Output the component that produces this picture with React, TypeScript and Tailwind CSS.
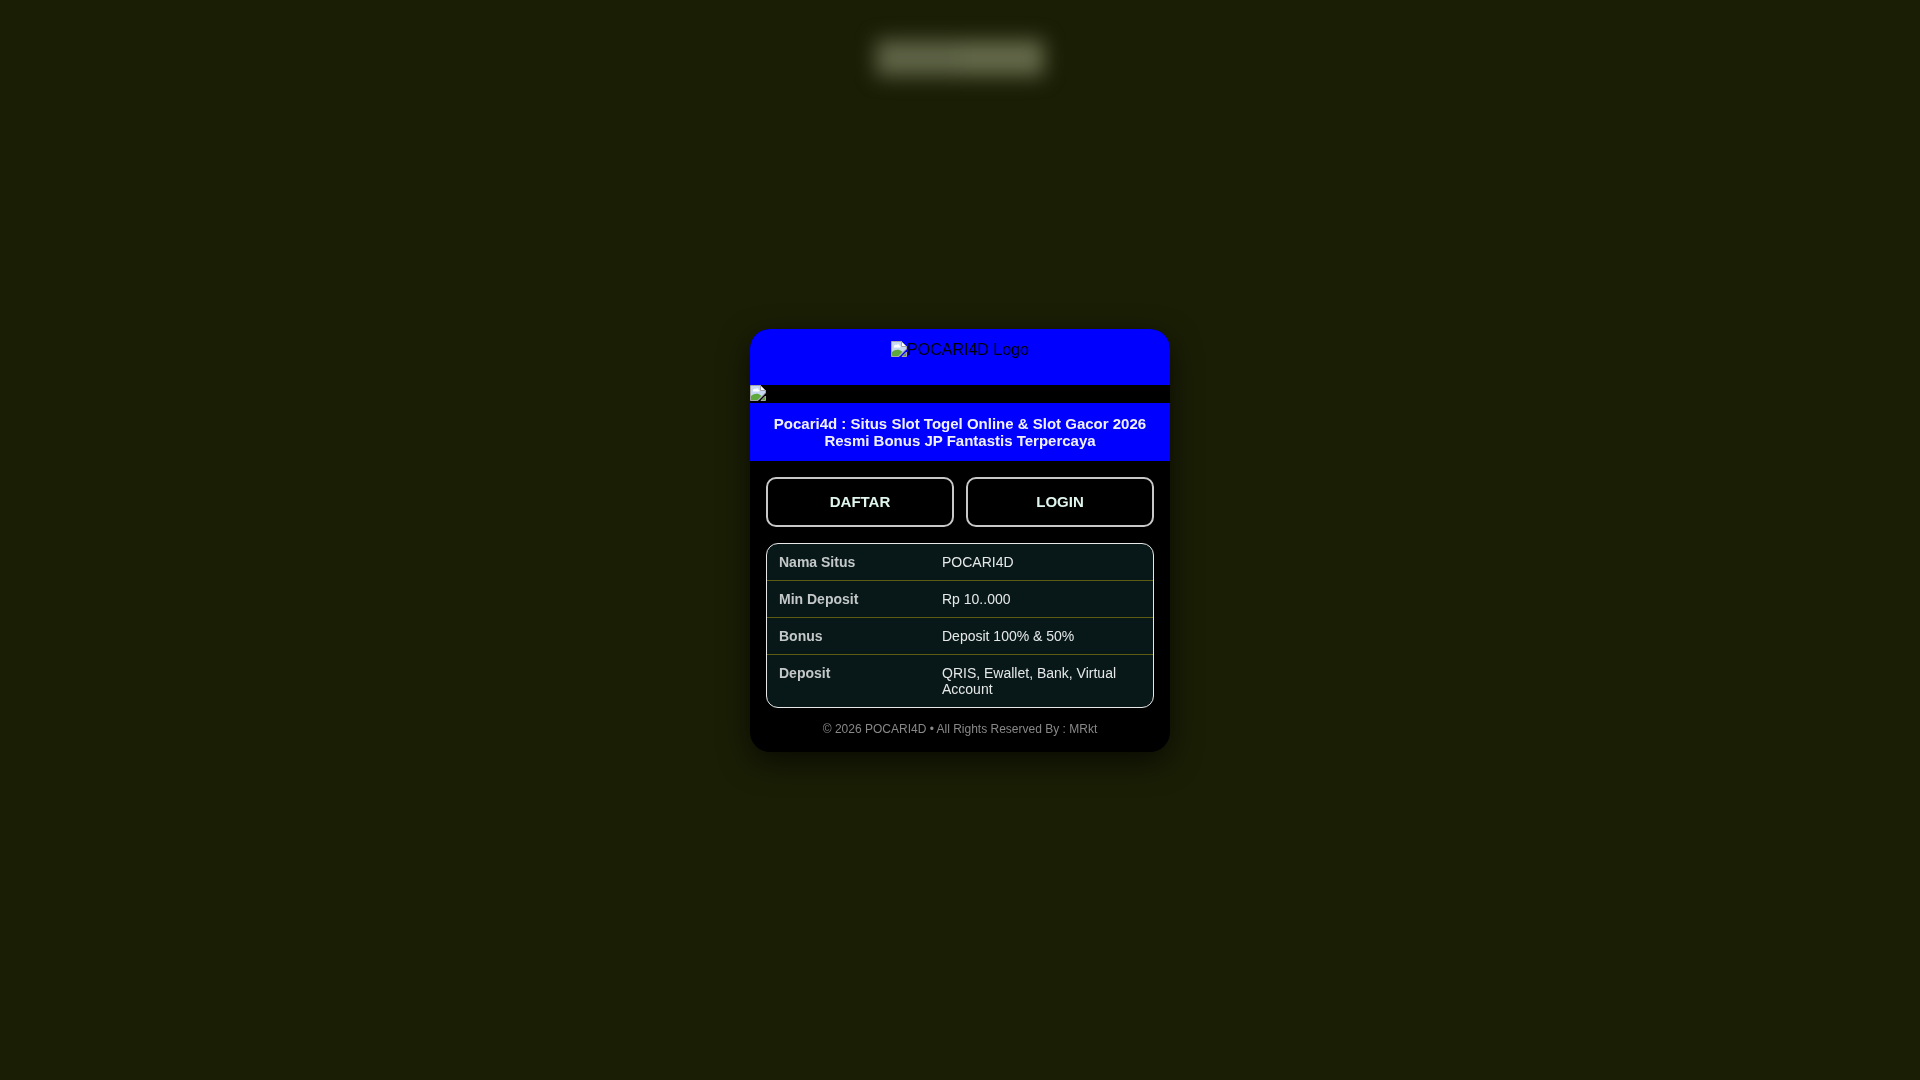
import React from "react";

const FONT = "font-['Liberation_Sans',Arial,sans-serif]";

const rows = [
  { label: "Nama Situs", value: "POCARI4D" },
  { label: "Min Deposit", value: "Rp 10..000" },
  { label: "Bonus", value: "Deposit 100% & 50%" },
  { label: "Deposit", value: "QRIS, Ewallet, Bank, Virtual Account" },
];

// chrome's missing-image glyph, redrawn
const BrokenImage = () => (
  <svg width="16" height="16" viewBox="0 0 16 16" className="inline-block shrink-0 align-top">
    <path d="M0.5 0.5H10.5L15.5 5.5V8L8 15.500H0.5Z" fill="#c6d8f4" stroke="#a6a6a6" />
    <path d="M10.500 0.500V5.500H15.500Z" fill="#ffffff" stroke="#a6a6a6" />
    <path d="M3 5.500C3 4 4.500 3.500 5.500 3.900C6.500 2.900 8.500 3.300 8.500 4.800C9.500 4.800 10 6 9.300 6.500H3.500C2.800 6.500 2.600 5.900 3 5.500Z" fill="#ffffff" />
    <path d="M1 15V11C3.500 8.800 6.500 8.300 9 9.300L11.500 10.800L7.500 15Z" fill="#5fa83c" />
    <path d="M15.500 11V15.500H11Z" fill="#5f9c3f" stroke="#a6a6a6" />
  </svg>
);

const ActionButton = ({ children }: { children: React.ReactNode }) => (
  <button className="h-[50px] flex-1 rounded-[10px] border-2 border-[#c8c8c8] bg-black pt-[2px] text-[15px] font-bold text-[#e0f5ee]">
    {children}
  </button>
);

export default function App() {
  return (
    <div className={`relative flex min-h-screen items-center justify-center bg-[#1a1e05] ${FONT}`}>
      {/* blurred top strip */}
      <div className="absolute left-1/2 top-[40px] flex h-[36px] w-[168px] -translate-x-1/2 blur-[10px]">
        <div className="h-full flex-1 bg-[#5f6447]" />
        <div className="h-full flex-1 bg-[#64694a]" />
      </div>

      <main className="w-[420px] transform-gpu overflow-hidden rounded-[20px] bg-black shadow-[0_10px_30px_rgba(0,0,0,0.6)]">
        <header className="flex h-[56px] justify-center bg-[#0000ff] pt-3">
          <div className="flex h-[18px] items-start text-base leading-[18px] text-black">
            <BrokenImage />
            <span>POCARI4D Logo</span>
          </div>
        </header>

        <div className="h-[18px] bg-black">
          <BrokenImage />
        </div>

        <h1 className="bg-[#0000ff] px-4 py-[12px] text-center text-[15px] font-bold leading-[17px] text-[#f0f0ff]">
          Pocari4d : Situs Slot Togel Online &amp; Slot Gacor 2026
          <br />
          Resmi Bonus JP Fantastis Terpercaya
        </h1>

        <section className="flex flex-col p-4">
          <div className="mb-4 flex gap-3">
            <ActionButton>DAFTAR</ActionButton>
            <ActionButton>LOGIN</ActionButton>
          </div>

          <div className="mb-[14px] overflow-hidden rounded-[12px] border border-[#e8e8e8] bg-[#081818] text-sm leading-4">
            {rows.map((row, i) => (
              <div key={row.label} className={`flex ${i > 0 ? "border-t border-[#5c5c12]" : ""}`}>
                <div className="w-[163px] shrink-0 px-3 py-[10px] font-bold text-[#c4c8c8]">{row.label}</div>
                <div className="flex-1 px-3 py-[10px] text-[#e6e8e8]">{row.value}</div>
              </div>
            ))}
          </div>

          <footer className="text-center text-xs leading-[14px] text-[#888888]">
            © 2026 POCARI4D • All Rights Reserved By : MRkt
          </footer>
        </section>
      </main>
    </div>
  );
}
